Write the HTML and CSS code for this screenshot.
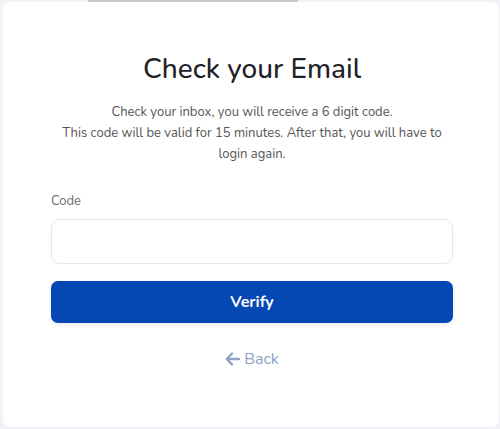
FILE: index.html
```html
<!DOCTYPE html>
<html lang="en">
<head>
  <meta charset="UTF-8">
  <meta name="viewport" content="width=device-width, initial-scale=1.0">
  <title>Check your Email</title>
  <link rel="stylesheet" href="styles.css">
</head>
<body>
  <div class="scroll-thumb"></div>
  <div class="card">
    <h1>Check your Email</h1>
    <p class="info">
      Check your inbox, you will receive a 6 digit code.<br>
      This code will be valid for 15 minutes. After that, you will have to login again.
    </p>
    <form class="verify-form" onsubmit="return false">
      <label for="code">Code</label>
      <input type="text" id="code" class="code-input">
      <button type="submit" class="verify-btn">Verify</button>
    </form>
    <a href="#" class="back-link">
      <svg width="15" height="14" viewBox="0 0 15 14" aria-hidden="true">
        <path d="M7 1.5 L1.8 7 L7 12.5 M2 7 H14" fill="none" stroke="currentColor" stroke-width="2.4" stroke-linecap="round" stroke-linejoin="round"/>
      </svg>
      Back
    </a>
  </div>
</body>
</html>
```

FILE: styles.css
```css
html, body {
  height: 100%;
}
body {
  margin: 0;
  background-color: #f1f1f6;
  font-family: "Nunito", Lato, "Open Sans", sans-serif;
  color: #222;
  position: relative;
}
.scroll-thumb {
  position: absolute;
  top: 0;
  left: 88px;
  width: 210px;
  height: 2px;
  background-color: #c8c8cc;
}
.card {
  box-sizing: border-box;
  margin: 2px 1px 2px 3px;
  height: 425px;
  background-color: #fff;
  border-radius: 8px;
  padding: 50px 46px 0 48px;
  display: flex;
  flex-direction: column;
  align-items: center;
}
h1 {
  margin: 0;
  font-size: 28px;
  font-weight: 500;
  color: #1f2229;
  line-height: 34px;
}
.info {
  margin: 16px 0 0;
  font-size: 13px;
  line-height: 21px;
  color: #555;
  text-align: center;
  padding: 0 6px;
}
.verify-form {
  width: 100%;
  margin-top: 27px;
  display: flex;
  flex-direction: column;
}
.verify-form label {
  font-size: 13px;
  color: #6b6b75;
  line-height: 18px;
}
.code-input {
  margin-top: 9px;
  height: 45px;
  box-sizing: border-box;
  border: 1px solid #e6e6ee;
  border-radius: 9px;
  padding: 0 14px;
  font: inherit;
  outline: none;
}
.verify-btn {
  margin-top: 17px;
  height: 42px;
  border: none;
  border-radius: 7px;
  background-color: #0547b3;
  color: #fff;
  font-family: inherit;
  font-size: 16px;
  font-weight: 700;
  box-shadow: 0 2px 4px rgba(0, 0, 0, 0.08);
  cursor: pointer;
}
.back-link {
  margin-top: 25px;
  display: flex;
  align-items: center;
  gap: 4px;
  font-size: 16px;
  color: #8ea1c6;
  text-decoration: none;
}
```
